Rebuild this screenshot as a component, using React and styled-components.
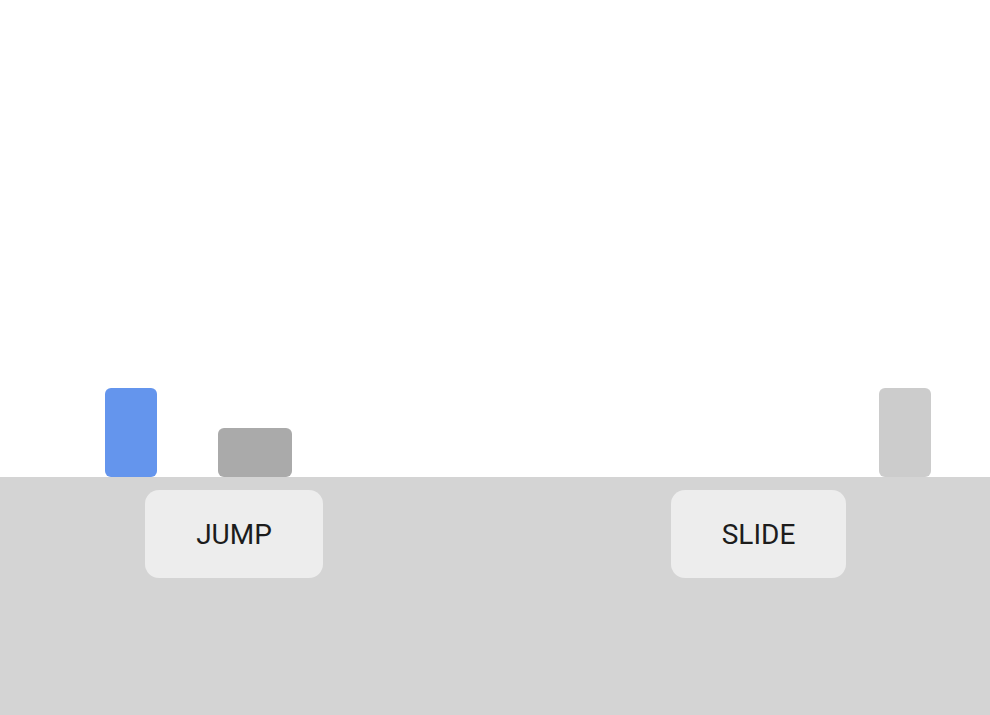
import styled, { createGlobalStyle } from 'styled-components';

const GlobalStyle = createGlobalStyle`
    html, body {
        margin: 0;
        padding: 0;
        background: #ffffff;
        font-family: Roboto, "Liberation Sans", sans-serif;
    }
`;

const Game = styled.div`
    display: flex;
    flex-direction: column;
    width: 990px;
    height: 715px;
    overflow: hidden;
`;

const Sky = styled.div`
    position: relative;
    height: 477px;
    background: #ffffff;
`;

// sprites sit on the game canvas, their place is the content
const Sprite = styled.div`
    position: absolute;
    bottom: 0;
    left: ${(p) => p.x}px;
    width: ${(p) => p.w}px;
    height: ${(p) => p.h}px;
    background: ${(p) => p.color};
    border-radius: 6px;
`;

const Ground = styled.div`
    flex: 1;
    background: #d4d4d4;
    display: flex;
    align-items: flex-start;
    padding: 13px 0 0 145px;
    gap: 348px;
`;

const Control = styled.button`
    height: 88px;
    width: ${(p) => p.w}px;
    border: none;
    border-radius: 14px;
    background: #ededed;
    color: #1c1c1c;
    font-family: Roboto, "Liberation Sans", sans-serif;
    font-size: 28px;
    cursor: pointer;
`;

function App() {
    return (
        <>
            <GlobalStyle />
            <Game>
                <Sky>
                    <Sprite x={105} w={52} h={89} color="#6495ed" />
                    <Sprite x={218} w={74} h={49} color="#aaaaaa" />
                    <Sprite x={879} w={52} h={89} color="#cccccc" />
                </Sky>
                <Ground>
                    <Control w={178}>JUMP</Control>
                    <Control w={175}>SLIDE</Control>
                </Ground>
            </Game>
        </>
    );
}

export default App;
